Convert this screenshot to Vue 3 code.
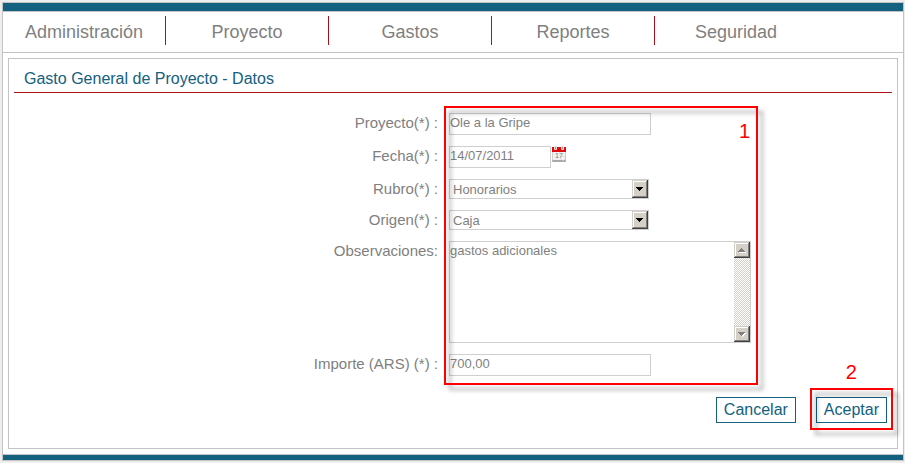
<script setup>
import { ref } from 'vue'

const menu = ['Administración', 'Proyecto', 'Gastos', 'Reportes', 'Seguridad']
const proyecto = ref('Ole a la Gripe')
const fecha = ref('14/07/2011')
const rubro = ref('Honorarios')
const origen = ref('Caja')
const observaciones = ref('gastos adicionales')
const importe = ref('700,00')
</script>

<template>
  <div class="page">
    <div class="frame">
      <div class="bar bar-top"></div>
      <nav class="menu">
        <a v-for="item in menu" :key="item" href="#" class="menu-item">{{ item }}</a>
      </nav>
      <main class="content">
        <section class="panel">
          <h1 class="title">Gasto General de Proyecto - Datos</h1>
          <form @submit.prevent>
            <div class="fields">
              <label for="proyecto">Proyecto(*) :</label>
              <input id="proyecto" v-model="proyecto" class="box text" type="text" />

              <label for="fecha">Fecha(*) :</label>
              <div class="date">
                <input id="fecha" v-model="fecha" class="box text short" type="text" />
                <button type="button" class="calendar" aria-label="Calendario">
                  <svg width="14" height="16" viewBox="0 0 14 16">
                    <rect x="0" y="5" width="14" height="10" fill="#cfcfcf" />
                    <rect x="1" y="5" width="12" height="9" fill="#f1f1f1" />
                    <rect x="0" y="14" width="14" height="2" rx="1" fill="#a9a9a9" />
                    <rect x="0" y="1" width="14" height="5" fill="#e00a0a" />
                    <rect x="2" y="0" width="3" height="4" rx="1" fill="#e6dede" />
                    <rect x="9" y="0" width="3" height="4" rx="1" fill="#e6dede" />
                    <rect x="3" y="1" width="1" height="2" fill="#a59a9a" />
                    <rect x="10" y="1" width="1" height="2" fill="#a59a9a" />
                    <text x="3" y="12" class="day">17</text>
                    <path d="M9 11.500l2-1.500 2 1.500v2l-2 1-2-1z" fill="#fafafa" stroke="#bdbdbd" stroke-width=".5" />
                  </svg>
                </button>
              </div>

              <label for="rubro">Rubro(*) :</label>
              <div class="box select">
                <select id="rubro" v-model="rubro">
                  <option>Honorarios</option>
                </select>
                <svg class="drop" width="16" height="18" viewBox="0 0 16 18" shape-rendering="crispEdges">
                  <rect width="16" height="18" fill="#404040" />
                  <rect width="15" height="17" fill="#d4d0c8" />
                  <rect x="1" y="1" width="14" height="16" fill="#808080" />
                  <rect x="1" y="1" width="13" height="15" fill="#fff" />
                  <rect x="2" y="2" width="12" height="14" fill="#d4d0c8" />
                  <path d="M4 7h7v1h-7zM5 8h5v1h-5zM6 9h3v1h-3zM7 10h1v1h-1z" fill="#000" />
                </svg>
              </div>

              <label for="origen">Origen(*) :</label>
              <div class="box select">
                <select id="origen" v-model="origen">
                  <option>Caja</option>
                </select>
                <svg class="drop" width="16" height="18" viewBox="0 0 16 18" shape-rendering="crispEdges">
                  <rect width="16" height="18" fill="#404040" />
                  <rect width="15" height="17" fill="#d4d0c8" />
                  <rect x="1" y="1" width="14" height="16" fill="#808080" />
                  <rect x="1" y="1" width="13" height="15" fill="#fff" />
                  <rect x="2" y="2" width="12" height="14" fill="#d4d0c8" />
                  <path d="M4 7h7v1h-7zM5 8h5v1h-5zM6 9h3v1h-3zM7 10h1v1h-1z" fill="#000" />
                </svg>
              </div>

              <label for="observaciones">Observaciones:</label>
              <div class="box area">
                <textarea id="observaciones" v-model="observaciones"></textarea>
                <div class="scroll">
                  <svg width="16" height="16" viewBox="0 0 16 16" shape-rendering="crispEdges">
                    <rect width="16" height="16" fill="#404040" />
                    <rect width="15" height="15" fill="#d4d0c8" />
                    <rect x="1" y="1" width="14" height="14" fill="#808080" />
                    <rect x="1" y="1" width="13" height="13" fill="#fff" />
                    <rect x="2" y="2" width="12" height="12" fill="#d4d0c8" />
                    <path d="M5 10h7v1h-7z" fill="#fff" />
                    <path d="M7 6h1v1h-1zM6 7h3v1h-3zM5 8h5v1h-5zM4 9h7v1h-7z" fill="#808080" />
                  </svg>
                  <svg width="16" height="16" viewBox="0 0 16 16" shape-rendering="crispEdges">
                    <rect width="16" height="16" fill="#404040" />
                    <rect width="15" height="15" fill="#d4d0c8" />
                    <rect x="1" y="1" width="14" height="14" fill="#808080" />
                    <rect x="1" y="1" width="13" height="13" fill="#fff" />
                    <rect x="2" y="2" width="12" height="12" fill="#d4d0c8" />
                    <path d="M5 7h7v1h-7zM6 8h5v1h-5zM7 9h3v1h-3zM8 10h1v1h-1z" fill="#fff" />
                    <path d="M4 6h7v1h-7zM5 7h5v1h-5zM6 8h3v1h-3zM7 9h1v1h-1z" fill="#808080" />
                  </svg>
                </div>
              </div>

              <label for="importe">Importe (ARS) (*) :</label>
              <input id="importe" v-model="importe" class="box text" type="text" />

              <div class="mark mark-fields"></div>
              <span class="number number-fields">1</span>
            </div>

            <div class="actions">
              <button type="button" class="action">Cancelar</button>
              <div class="accept">
                <button type="submit" class="action">Aceptar</button>
                <div class="mark mark-accept"></div>
                <span class="number number-accept">2</span>
              </div>
            </div>
          </form>
        </section>
      </main>
      <div class="bar bar-bottom"></div>
    </div>
  </div>
</template>

<style>
body {
  background: #eee;
}
</style>

<style scoped>
.page {
  padding: 2px 1px 2px 2px;
  font-family: "Liberation Sans", Arial, sans-serif;
  color: #7f7f7f;
}

.page *,
.page {
  box-sizing: border-box;
}

.frame {
  border: 1px solid #c3c3c3;
  background: #fff;
}

.bar {
  background: #13607f;
}

.bar-top {
  height: 9px;
  border-bottom: 1px solid #c3c3c3;
}

.bar-bottom {
  height: 6px;
  border-top: 1px solid #c3c3c3;
}

.menu {
  display: flex;
  padding: 4px 0 7px;
  border-bottom: 1px solid #c3c3c3;
}

.menu-item {
  width: 163px;
  height: 29px;
  border-right: 1px solid #a9121b;
  color: #7f7f7f;
  font-size: 18px;
  line-height: 32px;
  text-align: center;
  text-decoration: none;
}

.menu-item:last-child {
  border-right-color: transparent;
}

.content {
  padding: 5px;
}

.panel {
  padding: 0 5px 25px;
  border: 1px solid #c3c3c3;
}

.title {
  margin: 0;
  padding: 10px 10px 3px;
  border-bottom: 1px solid #a9121b;
  color: #13607f;
  font-size: 16px;
  font-weight: normal;
  line-height: 20px;
}

.fields {
  position: relative;
  display: grid;
  grid-template-columns: 424fr 443fr;
  gap: 11px;
  margin-top: 20px;
  justify-items: start;
}

label {
  justify-self: end;
  height: 20px;
  font-size: 15px;
  line-height: 20px;
}

.box {
  border: 1px solid #cfcfcf;
  background: #fff;
}

.text,
select,
textarea {
  margin: 0;
  color: #7f7f7f;
  font-family: inherit;
  font-size: 13px;
  outline: none;
}

.text {
  width: 202px;
  height: 22px;
  padding: 0 0 3px;
}

.date {
  display: flex;
  gap: 1px;
}

.short {
  width: 102px;
}

.calendar {
  display: flex;
  align-items: flex-start;
  padding: 0;
  border: 0;
  background: none;
}

.day {
  fill: #777;
  font-size: 7px;
}

.select {
  display: flex;
  width: 200px;
  height: 20px;
}

select {
  flex: 1;
  padding: 0 3px;
  border: 0;
  appearance: none;
  background: none;
}

.area {
  display: flex;
  width: 302px;
  height: 102px;
}

textarea {
  flex: 1;
  padding: 1px 0;
  border: 0;
  background: none;
  line-height: 15px;
  resize: none;
}

.scroll {
  display: flex;
  flex-direction: column;
  justify-content: space-between;
  background: repeating-conic-gradient(#d4d0c8 0 25%, #fff 0 50%) 0 0 / 2px 2px;
}

.mark {
  position: absolute;
  border: 2px solid #f00;
  filter: drop-shadow(5px 5px 2px rgba(0, 0, 0, 0.35));
  pointer-events: none;
}

.number {
  position: absolute;
  color: #f00;
  font-size: 20px;
  line-height: 24px;
}

.mark-fields {
  grid-area: 1 / 2 / 7 / 3;
  top: -7px;
  bottom: -9px;
  left: -5px;
  width: 314px;
}

.number-fields {
  grid-area: 1 / 2 / 2 / 3;
  top: 6px;
  left: 290px;
}

.actions {
  display: flex;
  justify-content: flex-end;
  gap: 20px;
  margin-top: 21px;
  padding-right: 5px;
}

.accept {
  position: relative;
}

.action {
  display: block;
  height: 26px;
  margin: 0;
  padding: 0 7px;
  border: 1px solid #13607f;
  background: #fff;
  color: #13607f;
  font-family: inherit;
  font-size: 16px;
  line-height: 24px;
}

.mark-accept {
  top: -9px;
  right: -6px;
  bottom: -7px;
  left: -6px;
}

.number-accept {
  top: -37px;
  left: 0;
  width: 100%;
  text-align: center;
}
</style>
